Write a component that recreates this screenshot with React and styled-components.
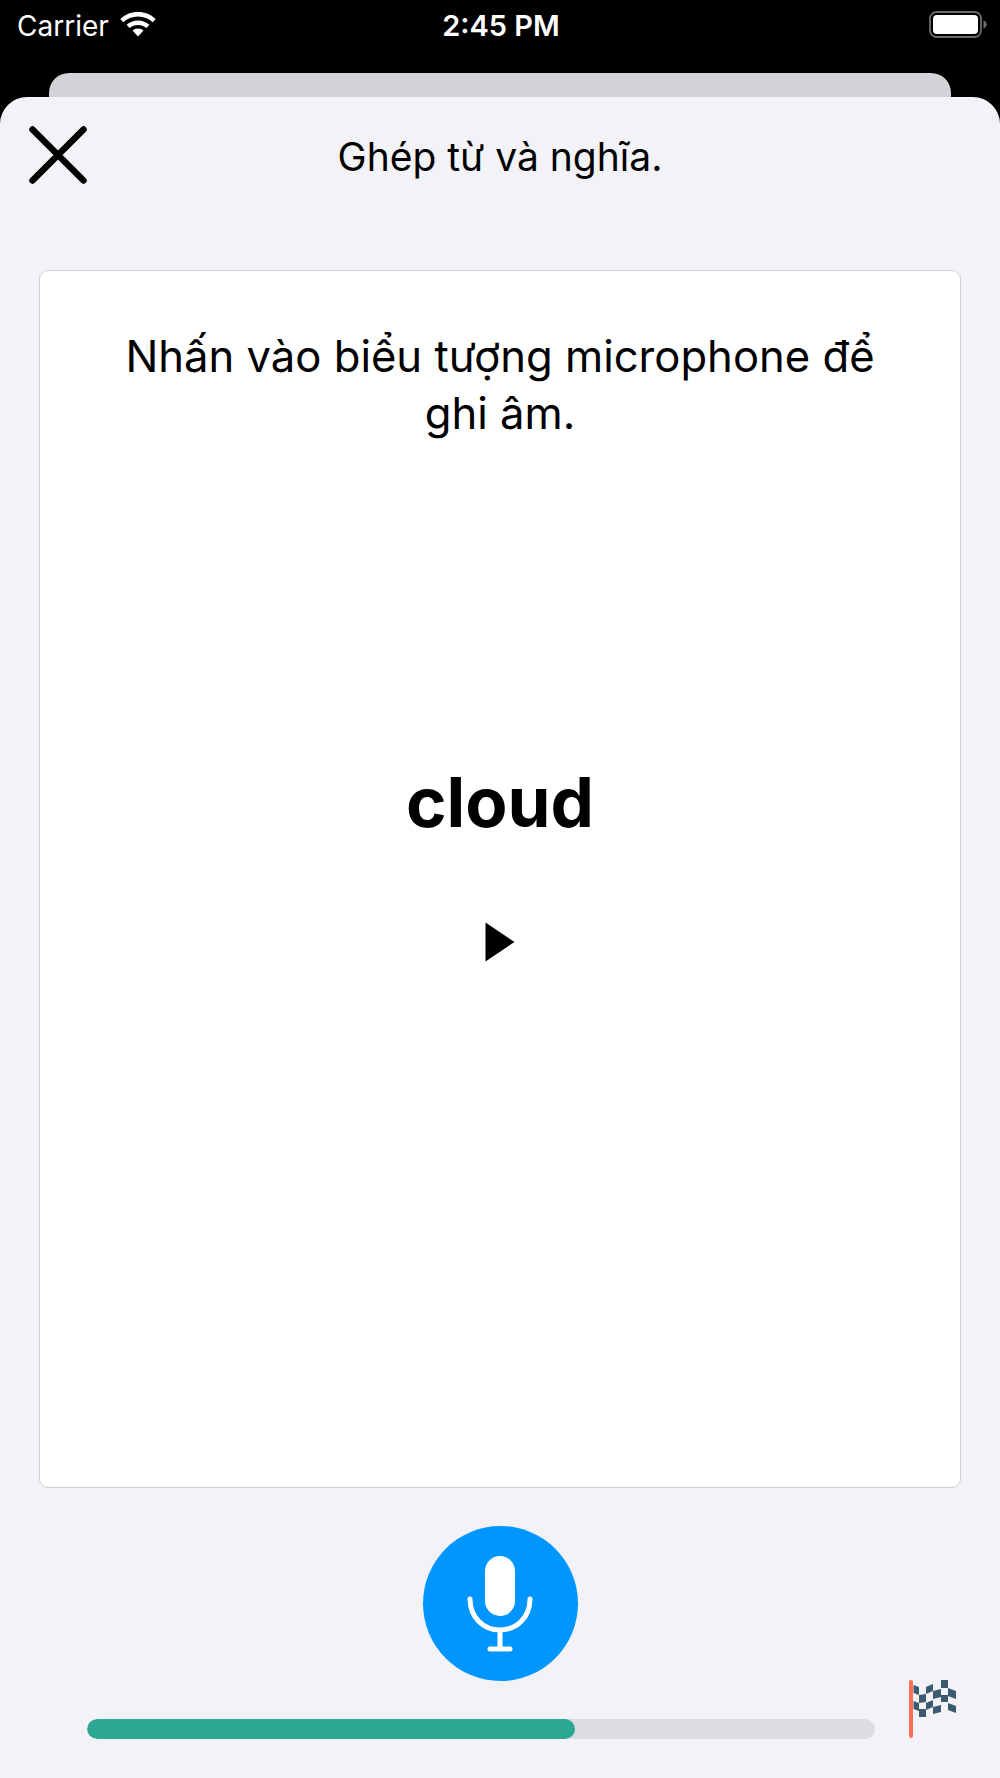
import styled, { createGlobalStyle } from 'styled-components'

const Global = createGlobalStyle`
  html, body { margin: 0; padding: 0; background: #000; }
  * { box-sizing: border-box; }
  body { font-family: Inter, "Noto Sans", sans-serif; }
`

const Screen = styled.div`
  width: 1000px;
  height: 1778px;
  display: flex;
  flex-direction: column;
  background: #000;
  overflow: hidden;
`

const StatusBar = styled.div`
  height: 73px;
  flex: none;
  display: grid;
  grid-template-columns: 1fr auto 1fr;
  padding: 8px 11px 0 17px;
  color: #fff;
`

const StatusLeft = styled.div`
  display: flex;
  align-items: flex-start;
  gap: 10px;
  font-size: 28px;
  line-height: 36px;
`

const Clock = styled.div`
  font-size: 29px;
  line-height: 36px;
  font-weight: 600;
  margin-right: 4px;
`

const StatusRight = styled.div`
  display: flex;
  justify-content: flex-end;
  padding-top: 3px;
`

const BackSheet = styled.div`
  height: 24px;
  flex: none;
  margin: 0 49px;
  background: #d3d3d8;
  border-radius: 20px 20px 0 0;
`

const Sheet = styled.div`
  flex: 1;
  display: flex;
  flex-direction: column;
  background: #f2f2f7;
  border-radius: 27px 27px 0 0;
`

const Header = styled.div`
  height: 173px;
  flex: none;
  display: flex;
  align-items: flex-start;
  justify-content: center;
  padding-top: 36px;
  position: relative;
`

const Title = styled.h1`
  margin: 0;
  font-size: 39px;
  line-height: 48px;
  font-weight: 400;
  color: #000;
`

const CloseButton = styled.button`
  position: absolute;
  left: 26px;
  top: 26px;
  width: 64px;
  height: 64px;
  padding: 0;
  border: 0;
  background: none;
  display: block;
`

const Card = styled.div`
  height: 1218px;
  flex: none;
  margin: 0 39px;
  padding: 57px 70px 0;
  display: flex;
  flex-direction: column;
  align-items: center;
  background: #fff;
  border: 1px solid #cfcfd4;
  border-radius: 9px;
`

const Prompt = styled.p`
  margin: 0;
  font-size: 43.6px;
  line-height: 57px;
  font-weight: 400;
  text-align: center;
  color: #000;
`

const Word = styled.div`
  margin-top: 320px;
  font-size: 69px;
  line-height: 80px;
  font-weight: 700;
  color: #000;
`

const PlayIcon = styled.svg`
  display: block;
  margin-top: 80px;
  width: 30px;
  height: 40px;
`

const MicRow = styled.div`
  display: flex;
  justify-content: center;
  padding-top: 38px;
  flex: none;
`

const MicButton = styled.button`
  width: 155px;
  height: 155px;
  padding: 0;
  border: 0;
  border-radius: 50%;
  background: #0096ff;
  display: flex;
  align-items: center;
  justify-content: center;
`

const ProgressRow = styled.div`
  display: flex;
  align-items: flex-end;
  gap: 34px;
  padding-left: 87px;
  margin-top: -2px;
  flex: none;
`

const Track = styled.div`
  width: 788px;
  height: 20px;
  border-radius: 10px;
  background: #dcdce1;
  overflow: hidden;
`

const Fill = styled.div`
  height: 100%;
  border-radius: 10px;
  background: #2ba893;
`

const Flag = styled.svg`
  display: block;
  width: 50px;
  height: 60px;
  flex: none;
`

const Wifi = () => (
  <svg width="38" height="28" viewBox="0 0 38 28" style={{ marginTop: 2 }}>
    <path d="M19 2C12 2 6 4.6 1.3 9l3 3.2C8.200 8.600 13.300 6.500 19 6.500s10.800 2.100 14.700 5.700l3-3.200C32 4.600 26 2 19 2z" fill="#fff" />
    <path d="M19 10.500c-4.400 0-8.300 1.600-11.400 4.300l3 3.200c2.300-2 5.200-3.100 8.400-3.100s6.100 1.100 8.400 3.100l3-3.200c-3.100-2.700-7-4.300-11.400-4.300z" fill="#fff" />
    <path d="M19 18.500c-2.200 0-4.100.8-5.500 2.100L19 26.500l5.500-5.900c-1.400-1.300-3.300-2.100-5.500-2.100z" fill="#fff" />
  </svg>
)

const Battery = () => (
  <svg width="60" height="28" viewBox="0 0 60 28">
    <rect x="1" y="1" width="51" height="25" rx="6.500" fill="none" stroke="#6b6b6b" strokeWidth="1.800" />
    <rect x="4" y="4" width="45" height="19" rx="4" fill="#fff" />
    <path d="M54.500 9.500c2 .6 3.200 2.200 3.200 4s-1.200 3.400-3.200 4z" fill="#6b6b6b" />
  </svg>
)

const flagCells = [
  'M4.500 6L10 8v8L4.500 14z',
  'M10 16l7-1v8l-7 1z',
  'M17 8l7-3v7l-7 3z',
  'M24 12l8-2v8l-8 2z',
  'M32 1h7v8h-7z',
  'M39 9l8 3v8l-8-3z',
  'M4.500 22L10 24v8L4.500 30z',
  'M10 30l7 0v8l-7 0z',
  'M17 24l7-3v7l-7 3z',
  'M24 28l8-2v7l-8 2z',
  'M32 16h7v7h-7z',
  'M39 24l8 3v7l-8-3z',
]

export default function App() {
  return (
    <Screen>
      <Global />
      <StatusBar>
        <StatusLeft>
          Carrier
          <Wifi />
        </StatusLeft>
        <Clock>2:45 PM</Clock>
        <StatusRight>
          <Battery />
        </StatusRight>
      </StatusBar>
      <BackSheet />
      <Sheet>
        <Header>
          <CloseButton aria-label="close">
            <svg width="64" height="64" viewBox="0 0 64 64">
              <path d="M6.500 6.500l51 51M57.500 6.500l-51 51" stroke="#000" strokeWidth="6.500" strokeLinecap="round" fill="none" />
            </svg>
          </CloseButton>
          <Title>Ghép từ và nghĩa.</Title>
        </Header>
        <Card>
          <Prompt>Nhấn vào biểu tượng microphone để ghi âm.</Prompt>
          <Word>cloud</Word>
          <PlayIcon viewBox="0 0 30 40">
            <path d="M0.500 0.500L29.500 20L0.500 39.500z" fill="#000" />
          </PlayIcon>
        </Card>
        <MicRow>
          <MicButton aria-label="record">
            <svg width="72" height="100" viewBox="0 0 72 100">
              <rect x="21" y="2" width="30" height="60" rx="15" fill="#fff" />
              <path d="M6 45c0 18 13 31 30 31s30-13 30-31M36 76v19M26 95h20" stroke="#fff" strokeWidth="5" strokeLinecap="round" fill="none" />
            </svg>
          </MicButton>
        </MicRow>
        <ProgressRow>
          <Track>
            <Fill style={{ width: `${(488 / 788) * 100}%` }} />
          </Track>
          <Flag viewBox="0 0 50 60">
            <rect x="0" y="1" width="4" height="58" rx="2" fill="#ff6f57" />
            {flagCells.map((d) => (
              <path key={d} d={d} fill="#3b5a70" />
            ))}
          </Flag>
        </ProgressRow>
      </Sheet>
    </Screen>
  )
}
